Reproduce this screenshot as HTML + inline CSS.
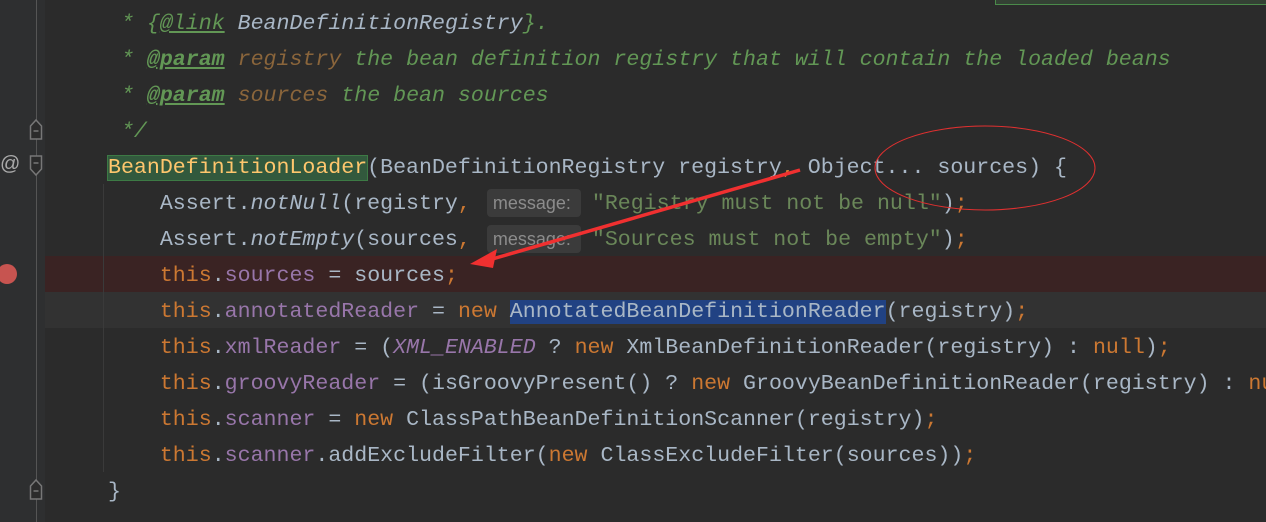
<html><head><style>
body{margin:0;width:1266px;height:522px;background:#2b2b2b;overflow:hidden;position:relative;font-family:"Liberation Mono",monospace;}
.g{position:absolute;left:0;top:0;width:45px;height:522px;background:#2e2f30;}
.vl{position:absolute;left:36px;top:0;width:1px;height:522px;background:#555;}
.l{position:absolute;left:108px;height:36px;line-height:36px;font-size:21.6px;color:#a9b7c6;white-space:pre;}
.c{color:#629755;font-style:italic}
.t{text-decoration:underline;color:#629755;font-weight:bold}
.p{color:#8a653b}
.k{color:#cc7832}
.f{color:#9876aa}
.s{color:#6a8759}
.i{font-style:italic}
.h{display:inline-block;box-sizing:border-box;width:94px;height:28px;line-height:28px;vertical-align:middle;margin:0 11px 0 16px;background:#3b3b3b;color:#8c8c8c;font-family:"Liberation Sans",sans-serif;font-size:18px;border-radius:4px;padding:0 6px;}
.row{position:absolute;left:45px;width:1221px;height:36px;}
</style></head><body>
<div class="g"></div><div class="vl"></div>
<div style="position:absolute;left:995px;top:-2px;width:270px;height:5px;border:1px solid #4a8a4a;background:#344134"></div>
<div class="row" style="top:256px;background:#3a2323"></div>
<div class="row" style="top:292px;background:#323232"></div>
<div style="position:absolute;left:103px;top:184px;width:1px;height:288px;background:#3a3a3a"></div>
<div style="position:absolute;left:-3px;top:264px;width:20px;height:20px;border-radius:50%;background:#c75450"></div>
<div style="position:absolute;left:0;top:153px;color:#aaa;font-size:20px;font-family:'Liberation Sans'">@</div>
<svg style="position:absolute;left:29px;top:118px" width="16" height="26"><path d="M1.5 8 L7 2 L12.5 8 V21 H1.5 Z" fill="#2b2b2b" stroke="#777" stroke-width="1.5"/><path d="M4.5 13 H9.5" stroke="#777" stroke-width="1.5"/></svg>
<svg style="position:absolute;left:29px;top:154px" width="16" height="26"><path d="M1.5 2 H12.5 V15 L7 21 L1.5 15 Z" fill="#2b2b2b" stroke="#777" stroke-width="1.5"/><path d="M4.5 9 H9.5" stroke="#777" stroke-width="1.5"/></svg>
<svg style="position:absolute;left:29px;top:478px" width="16" height="26"><path d="M1.5 8 L7 2 L12.5 8 V21 H1.5 Z" fill="#2b2b2b" stroke="#777" stroke-width="1.5"/><path d="M4.5 13 H9.5" stroke="#777" stroke-width="1.5"/></svg>
<div class="l" style="top:6px"><span class="c"> * {<span class="t" style="font-weight:normal">@link</span> <span style="color:#a9b7c6">BeanDefinitionRegistry</span>}.</span></div>
<div class="l" style="top:42px"><span class="c"> * <span class="t">@param</span> <span class="p">registry</span> the bean definition registry that will contain the loaded beans</span></div>
<div class="l" style="top:78px"><span class="c"> * <span class="t">@param</span> <span class="p">sources</span> the bean sources</span></div>
<div class="l" style="top:114px"><span class="c"> */</span></div>
<div class="l" style="top:150px"><span style="color:#ffc66d;background:#32593d;outline:1px solid #3d7a45">BeanDefinitionLoader</span>(BeanDefinitionRegistry registry<span class="k">,</span> Object... sources) {</div>
<div class="l" style="top:186px">    Assert.<span class="i">notNull</span>(registry<span class="k">,</span><span class="h">message:</span><span class="s">"Registry must not be null"</span>)<span class="k">;</span></div>
<div class="l" style="top:222px">    Assert.<span class="i">notEmpty</span>(sources<span class="k">,</span><span class="h">message:</span><span class="s">"Sources must not be empty"</span>)<span class="k">;</span></div>
<div class="l" style="top:258px">    <span class="k">this</span>.<span class="f">sources</span> = sources<span class="k">;</span></div>
<div class="l" style="top:294px">    <span class="k">this</span>.<span class="f">annotatedReader</span> = <span class="k">new</span> <span style="background:#214283">AnnotatedBeanDefinitionReader</span>(registry)<span class="k">;</span></div>
<div class="l" style="top:330px">    <span class="k">this</span>.<span class="f">xmlReader</span> = (<span class="f i">XML_ENABLED</span> ? <span class="k">new</span> XmlBeanDefinitionReader(registry) : <span class="k">null</span>)<span class="k">;</span></div>
<div class="l" style="top:366px">    <span class="k">this</span>.<span class="f">groovyReader</span> = (isGroovyPresent() ? <span class="k">new</span> GroovyBeanDefinitionReader(registry) : <span class="k">null</span>)<span class="k">;</span></div>
<div class="l" style="top:402px">    <span class="k">this</span>.<span class="f">scanner</span> = <span class="k">new</span> ClassPathBeanDefinitionScanner(registry)<span class="k">;</span></div>
<div class="l" style="top:438px">    <span class="k">this</span>.<span class="f">scanner</span>.addExcludeFilter(<span class="k">new</span> ClassExcludeFilter(sources))<span class="k">;</span></div>
<div class="l" style="top:474px">}</div>
<svg style="position:absolute;left:0;top:0" width="1266" height="522"><ellipse cx="985" cy="168" rx="110" ry="42" fill="none" stroke="#e03030" stroke-width="1"/><path d="M800 170 L482 262" stroke="#f03030" stroke-width="3.5"/><path d="M470 264 L497 249 L493 268 Z" fill="#f03030"/></svg>
</body></html>
